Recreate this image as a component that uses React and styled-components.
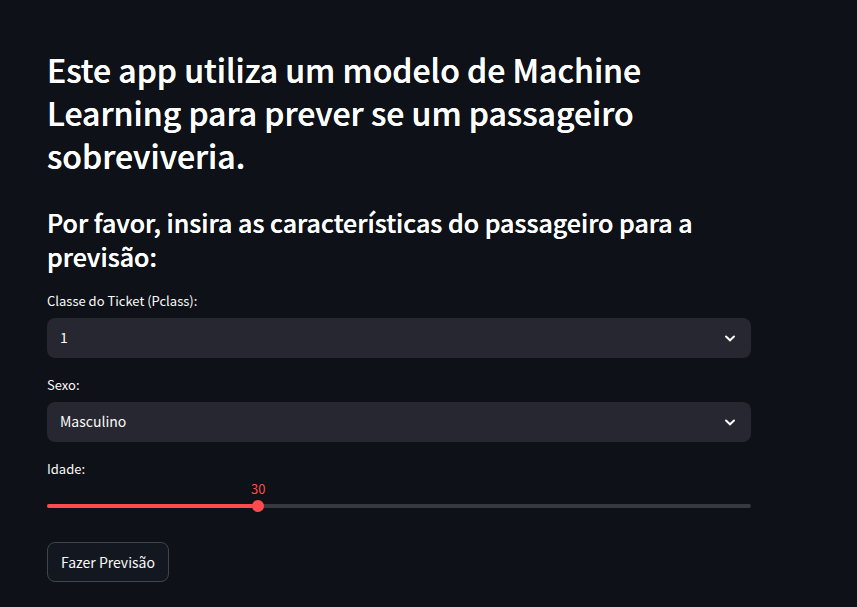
import React, { useState } from "react";
import styled, { createGlobalStyle } from "styled-components";

const GlobalStyle = createGlobalStyle`
  *, *::before, *::after { box-sizing: border-box; }
  body {
    margin: 0;
    background: #0e1117;
    color: #fafafa;
    font-family: "Source Sans Pro", "Noto Sans CJK SC", sans-serif;
    font-size: 14px;
  }
`;

const Page = styled.main`
  padding: 48px 106px 25px 47px;
`;

const Title = styled.h1`
  margin: 0 0 28px;
  color: #ffffff;
  font-size: 32px;
  font-weight: 500;
  line-height: 43px;
  text-shadow: 0 0 0 #ffffff;
`;

const Subtitle = styled.h2`
  margin: 0 0 17px;
  color: #ffffff;
  font-size: 25px;
  font-weight: 500;
  line-height: 34px;
  text-shadow: 0 0 0 #ffffff;
`;

const Form = styled.form`
  display: flex;
  flex-direction: column;
  gap: 16px;
`;

const Field = styled.div`
  display: flex;
  flex-direction: column;
  gap: 6px;
`;

const Label = styled.label`
  font-size: 13px;
  line-height: 22px;
`;

const SelectBox = styled.div`
  display: grid;
  align-items: center;
  height: 40px;
  border-radius: 8px;
  background: #262730;

  > * { grid-area: 1 / 1; }
`;

const Select = styled.select`
  appearance: none;
  width: 100%;
  height: 100%;
  padding: 0 40px 2px 13px;
  border: 0;
  border-radius: 8px;
  background: transparent;
  color: #fafafa;
  font: inherit;

  option { background: #262730; }
`;

const Chevron = styled.svg`
  justify-self: end;
  width: 20px;
  height: 20px;
  margin-right: 11px;
  pointer-events: none;
`;

const SliderField = styled.div`
  display: flex;
  flex-direction: column;
`;

const ValueRow = styled.div`
  position: relative;
  height: 20px;
`;

const Value = styled.output`
  position: absolute;
  top: 0;
  transform: translateX(-50%);
  color: #ff4b4b;
  font-size: 13px;
  line-height: 18px;
`;

const SliderBody = styled.div`
  display: grid;
  align-items: center;
  height: 12px;

  > * { grid-area: 1 / 1; }
`;

const Track = styled.div`
  height: 4px;
  overflow: hidden;
  border-radius: 2px;
  background: #363940;
`;

const Fill = styled.div`
  height: 100%;
  background: #ff4b4b;
`;

const Range = styled.input`
  appearance: none;
  width: calc(100% + 12px);
  height: 12px;
  margin: 0 -6px;
  background: transparent;

  &::-webkit-slider-thumb {
    appearance: none;
    width: 12px;
    height: 12px;
    border: 0;
    border-radius: 50%;
    background: #ff4b4b;
  }
`;

const Submit = styled.button`
  align-self: flex-start;
  height: 40px;
  margin-top: 14px;
  padding: 0 13px;
  border: 1px solid #41444c;
  border-radius: 8px;
  background: #131720;
  color: #fafafa;
  font: inherit;
`;

function SelectField({ id, label, options }) {
  return (
    <Field>
      <Label htmlFor={id}>{label}</Label>
      <SelectBox>
        <Select id={id}>
          {options.map((option) => (
            <option key={option}>{option}</option>
          ))}
        </Select>
        <Chevron viewBox="0 0 20 20" aria-hidden="true">
          <path
            d="M6 8.5 L10 12.3 L14 8.5"
            fill="none"
            stroke="#fafafa"
            strokeWidth="2"
            strokeLinecap="round"
          />
        </Chevron>
      </SelectBox>
    </Field>
  );
}

function AgeSlider() {
  const [age, setAge] = useState(30);
  return (
    <SliderField>
      <Label htmlFor="age">Idade:</Label>
      <ValueRow>
        <Value htmlFor="age" style={{ left: `${age}%` }}>{age}</Value>
      </ValueRow>
      <SliderBody>
        <Track>
          <Fill style={{ width: `${age}%` }} />
        </Track>
        <Range
          id="age"
          type="range"
          min="0"
          max="100"
          value={age}
          onChange={(event) => setAge(Number(event.target.value))}
        />
      </SliderBody>
    </SliderField>
  );
}

export default function App() {
  return (
    <>
      <GlobalStyle />
      <Page>
        <Title>
          Este app utiliza um modelo de Machine Learning para prever se um
          passageiro sobreviveria.
        </Title>
        <Subtitle>
          Por favor, insira as características do passageiro para a previsão:
        </Subtitle>
        <Form onSubmit={(event) => event.preventDefault()}>
          <SelectField
            id="pclass"
            label="Classe do Ticket (Pclass):"
            options={["1", "2", "3"]}
          />
          <SelectField
            id="sex"
            label="Sexo:"
            options={["Masculino", "Feminino"]}
          />
          <AgeSlider />
          <Submit type="submit">Fazer Previsão</Submit>
        </Form>
      </Page>
    </>
  );
}
